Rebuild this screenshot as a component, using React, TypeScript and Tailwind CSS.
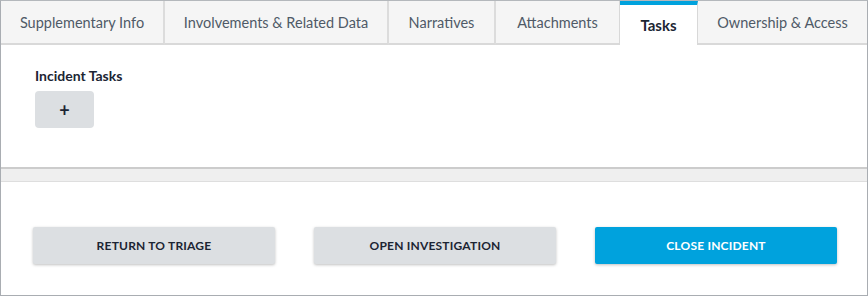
const tabs = [
  { label: 'Supplementary Info', w: 'w-[164px]' },
  { label: 'Involvements & Related Data', w: 'w-[224px]' },
  { label: 'Narratives', w: 'w-[107px]' },
  { label: 'Attachments', w: 'w-[124px]' },
  { label: 'Tasks', w: 'w-[78px]', active: true },
  { label: 'Ownership & Access', w: 'flex-1' },
];

export default function App() {
  return (
    <div className="w-[868px] h-[296px] bg-white border border-[#a9adb2] border-t-[#b4b8bc] font-['Lato','Open_Sans',sans-serif] flex flex-col overflow-hidden">
      {/* Tabs */}
      <div className="flex h-[44px] shrink-0">
        {tabs.map((t, i) =>
          t.active ? (
            <div
              key={i}
              className={`${t.w} flex items-center justify-center bg-white border-t-[4px] border-t-[#00a2dd] border-r border-r-[#d8d8d8] text-[15px] font-bold text-[#1c2533]`}
            >
              {t.label}
            </div>
          ) : (
            <div
              key={i}
              className={`${t.w} flex items-center justify-center bg-[#f5f5f5] border-b-2 border-b-[#d9d9d9] text-[14.5px] text-[#4f5a67] pt-[2px] ${i < 3 ? 'border-r-2 border-r-[#dcdcdc]' : ''} ${i === 3 ? 'border-r border-r-[#d8d8d8]' : ''}`}
            >
              {t.label}
            </div>
          )
        )}
      </div>

      {/* Tasks */}
      <div className="h-[122px] shrink-0 px-[34px] pt-[22px]">
        <div className="text-[14px] font-bold text-[#1c2533] leading-[18px]">Incident Tasks</div>
        <button className="mt-[6px] w-[59px] h-[37px] rounded-[4px] bg-[#dcdfe2] text-[#1c2533] text-[18px] font-bold leading-none flex items-center justify-center">
          +
        </button>
      </div>

      {/* Divider band */}
      <div className="h-[15px] shrink-0 bg-[#efefef] border-t-2 border-t-[#cccccc] border-b border-b-[#dedede]" />

      {/* Actions */}
      <div className="flex-1 flex items-start gap-[39px] pl-[32px] pt-[45px]">
        <button className="w-[242px] h-[37px] rounded-[2px] bg-[#dcdfe2] shadow-[0_1px_3px_rgba(0,0,0,0.25)] text-[12px] font-bold text-[#1c2533] tracking-[0.2px]">
          RETURN TO TRIAGE
        </button>
        <button className="w-[242px] h-[37px] rounded-[2px] bg-[#dcdfe2] shadow-[0_1px_3px_rgba(0,0,0,0.25)] text-[12px] font-bold text-[#1c2533] tracking-[0.2px]">
          OPEN INVESTIGATION
        </button>
        <button className="w-[242px] h-[37px] rounded-[2px] bg-[#00a2dd] shadow-[0_1px_3px_rgba(0,0,0,0.25)] text-[12px] font-bold text-white tracking-[0.2px]">
          CLOSE INCIDENT
        </button>
      </div>
    </div>
  );
}
